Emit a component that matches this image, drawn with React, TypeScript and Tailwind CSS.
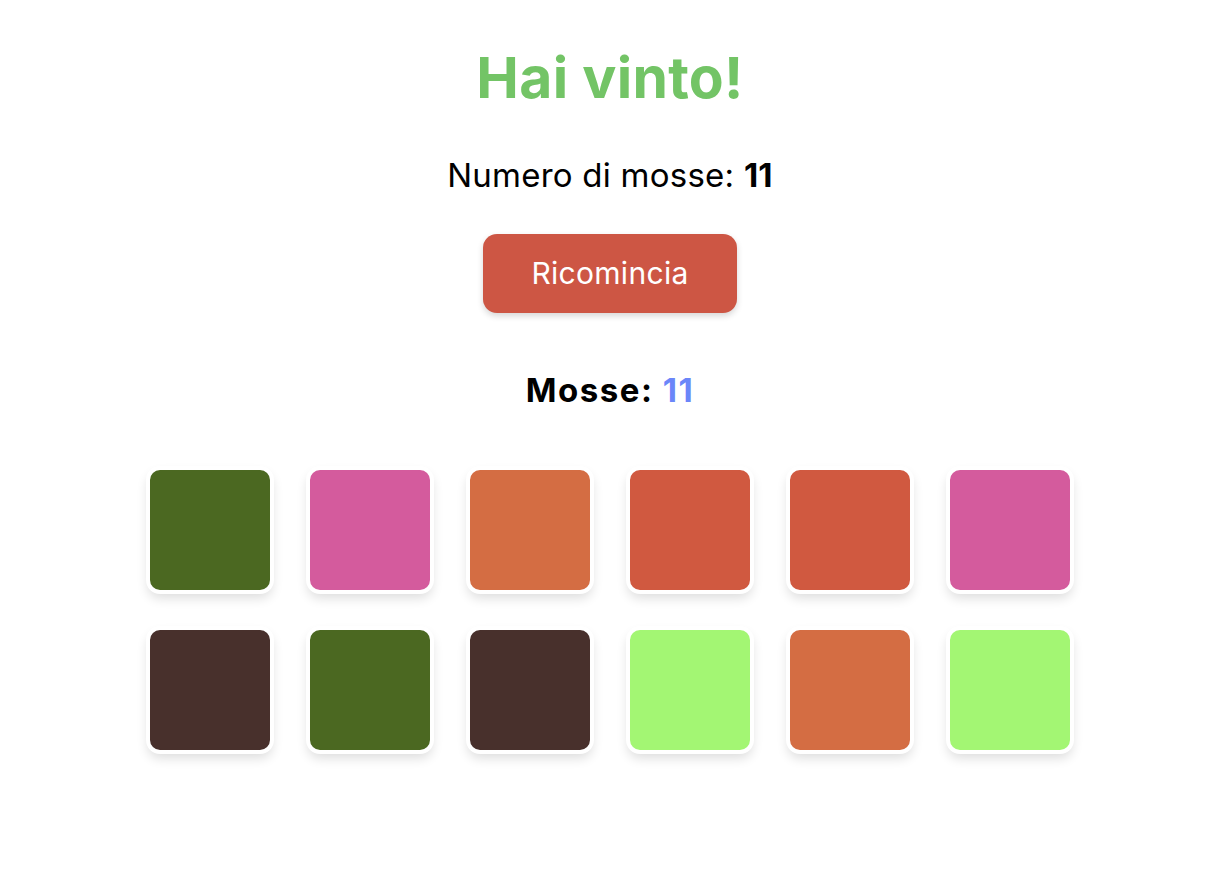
import React from "react";

const colors = [
  "bg-[#4b6821]",
  "bg-[#d45b9d]",
  "bg-[#d46d43]",
  "bg-[#d05940]",
  "bg-[#d05940]",
  "bg-[#d45b9d]",
  "bg-[#48302c]",
  "bg-[#4b6821]",
  "bg-[#48302c]",
  "bg-[#a3f673]",
  "bg-[#d46d43]",
  "bg-[#a3f673]",
];

export default function App() {
  return (
    <div
      className="min-h-[880px] w-full bg-white flex flex-col items-center pr-[6px] text-black"
      style={{ fontFamily: "Inter, 'Noto Sans', sans-serif" }}
    >
      <h1 className="mt-[50px] text-[57px] leading-[56px] font-bold text-[#73c466] tracking-[0.3px]">
        Hai vinto!
      </h1>
      <p className="mt-[49px] text-[33px] leading-[40px] tracking-[0.25px]">
        Numero di mosse: <span className="font-bold">11</span>
      </p>
      <button className="mt-[39px] w-[254px] h-[79px] rounded-[14px] bg-[#cd5644] text-white text-[30px] tracking-[0.3px] shadow-[0_3px_6px_rgba(0,0,0,0.16)]">
        Ricomincia
      </button>
      <h2 className="mt-[57px] text-[33px] leading-[40px] font-bold tracking-[1.5px]">
        Mosse: <span className="text-[#6b86f9]">11</span>
      </h2>
      <div className="mt-[56px] grid grid-cols-6 gap-[32px]">
        {colors.map((c, i) => (
          <div
            key={i}
            className={`w-[128px] h-[128px] rounded-[14px] border-4 border-white ${c} shadow-[0_6px_12px_-2px_rgba(0,0,0,0.14)]`}
          />
        ))}
      </div>
    </div>
  );
}
